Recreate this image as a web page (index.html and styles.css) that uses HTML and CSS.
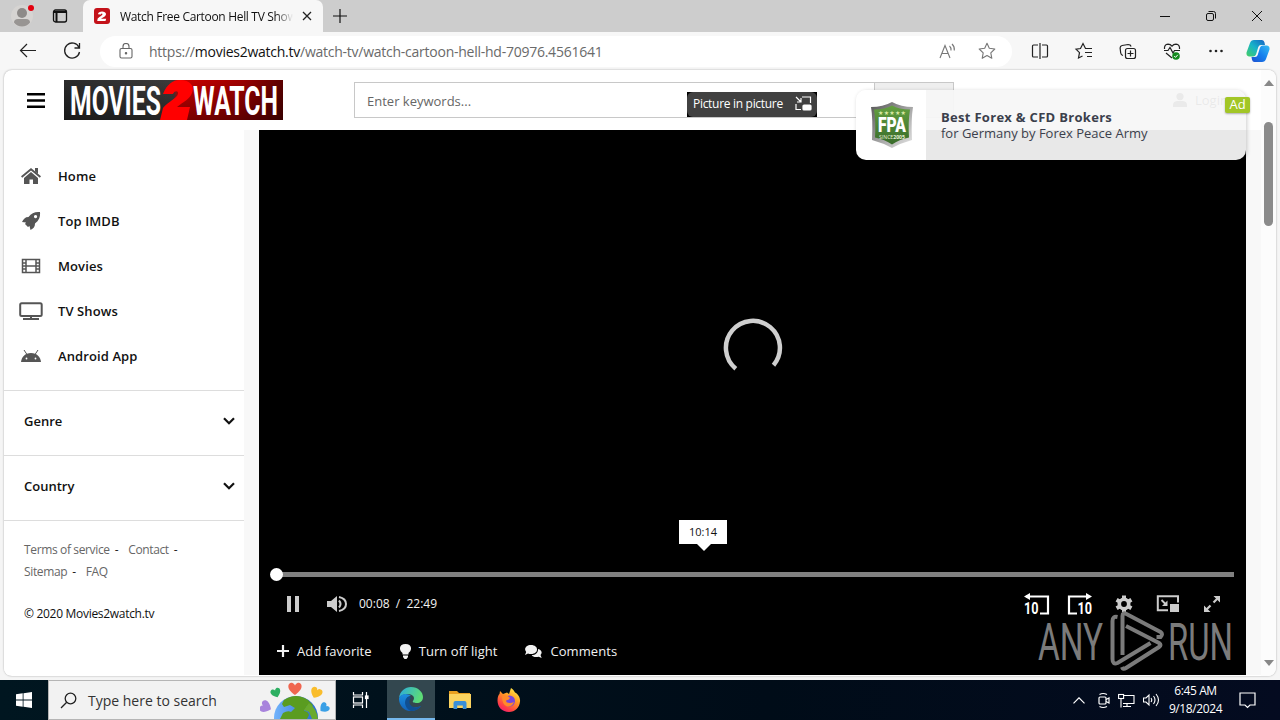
FILE: index.html
```html
<!DOCTYPE html>
<html lang="en">
<head>
    <meta charset="UTF-8">
    <meta name="viewport" content="width=device-width, initial-scale=1.0">
    <title>Watch Free Cartoon Hell TV Shows</title>
    <link rel="stylesheet" href="styles.css">
</head>
<body>
    <!-- Tab strip -->
    <div class="titlebar">
        <div class="title-btn profile">
            <svg width="24" height="24" viewBox="0 0 24 24"><circle cx="12" cy="12" r="11" fill="#d6d4d2"/><circle cx="12" cy="9" r="5" fill="#8d8a88"/><path d="M4 18.500q0-3.500 4-3.500h8q4 0 4 3.500-3 4-8 4t-8-4z" fill="#989593"/><circle cx="21" cy="4" r="3" fill="#e3000f"/></svg>
        </div>
        <div class="title-btn tabs-menu">
            <svg width="16" height="16" viewBox="0 0 16 16" fill="none" stroke="#111"><rect x="1.500" y="2" width="13" height="12" rx="2" stroke-width="1.300"/><path d="M2 4h12M4.500 4v10" stroke-width="2"/></svg>
        </div>
        <div class="tab">
            <svg width="16" height="16" viewBox="0 0 16 16"><rect width="16" height="16" rx="3" fill="#c4121a"/><path d="M4 6.200C4 2.500 12 2.500 12 6c0 2.300-3 3.300-5 4.700h5.200L11.500 13H3.200l.5-2.500C6 8.500 8.500 7.400 8.500 6.300 8.500 5.300 7 5.400 6.800 6.500z" fill="#fff"/></svg>
            <span class="tab-title">Watch Free Cartoon Hell TV Show</span>
            <svg class="tab-close" width="10" height="10" viewBox="0 0 10 10" stroke="#222" stroke-width="1.300"><path d="M1 1l8 8M9 1l-8 8"/></svg>
        </div>
        <div class="title-btn new-tab">
            <svg width="14" height="14" viewBox="0 0 14 14" stroke="#111" stroke-width="1.200"><path d="M7 0v14M0 7h14"/></svg>
        </div>
        <div class="window-btns">
            <svg width="46" height="32" viewBox="0 0 46 32" stroke="#111"><path d="M18 16.500h10"/></svg>
            <svg width="46" height="32" viewBox="0 0 46 32" stroke="#111" fill="none"><rect x="18.500" y="13.500" width="7" height="7" rx="1.500"/><path d="M20.500 11.500h5q2 0 2 2v5"/></svg>
            <svg width="46" height="32" viewBox="0 0 46 32" stroke="#111"><path d="M18 11l10 10M28 11l-10 10"/></svg>
        </div>
    </div>

    <!-- Toolbar -->
    <div class="toolbar">
        <div class="nav-btns">
            <svg width="44" height="38" viewBox="0 0 44 38" stroke="#222" fill="none" stroke-width="1.200"><path d="M14.500 18.500H30M21 12l-6.500 6.500L21 25"/></svg>
            <svg width="44" height="38" viewBox="0 0 44 38" stroke="#222" fill="none" stroke-width="1.300"><path d="M29 15.500a7.500 7.500 0 1 0 .5 4.500M29.500 11v5h-5"/></svg>
        </div>
        <div class="address">
            <svg class="lock" width="14" height="16" viewBox="0 0 14 16" stroke="#666" fill="none" stroke-width="1.100"><rect x="1" y="5.500" width="12" height="9.500" rx="1.500"/><path d="M4 5.500V3.500a3 3 0 0 1 6 0v2"/><circle cx="7" cy="10.200" r=".7" fill="#666"/></svg>
            <span class="url">https://<b>movies2watch.tv</b>/watch-tv/watch-cartoon-hell-hd-70976.4561641</span>
            <svg class="read-aloud" width="18" height="16" viewBox="0 0 18 16" stroke="#777" fill="none" stroke-width="1.100"><path d="M1 15L6 2.500 11 15M3 10.500h6.300M10.500 3q1.800 1.500 1.500 4.500M13 1q2.800 2.500 2.300 6.500"/></svg>
            <svg class="star" width="18" height="18" viewBox="0 0 18 18" stroke="#777" fill="none" stroke-width="1.100" stroke-linejoin="round"><path d="M9 1.300l2.300 5 5.500.7-4 3.800 1 5.500L9 13.600l-4.800 2.700 1-5.500-4-3.800 5.500-.7z"/></svg>
        </div>
        <div class="tools">
            <svg width="44" height="38" viewBox="0 0 44 38" stroke="#222" fill="none" stroke-width="1.200"><path d="M20 13h-4.500q-1 0-1 1v10q0 1 1 1H20M24 13h4.500q1 0 1 1v10q0 1-1 1H24M22 11v16"/></svg>
            <svg width="44" height="38" viewBox="0 0 44 38" stroke="#222" fill="none" stroke-width="1.200"><path d="M25.500 16.500h-2L21 11.500l-2.500 5-4.500.7 3.500 3.500-1 5.300 4-2M24 16.500h6M23 20.500h7M25 24.500h5"/></svg>
            <svg width="44" height="38" viewBox="0 0 44 38" stroke="#222" fill="none" stroke-width="1.200"><rect x="19.500" y="16.500" width="10" height="10" rx="2"/><path d="M24.500 18.500v6M21.500 21.500h6M17 23.500q-2-.5-2.300-2.500l-.6-5q0-2 2-2.500l6-1q2.500 0 3 2"/></svg>
            <svg width="44" height="38" viewBox="0 0 44 38" stroke="#222" fill="none" stroke-width="1.200"><path d="M14.500 17q-.5-4.500 3.500-4.800 2.500 0 4 2 1.500-2 4-2 4 .3 3.500 4.800M14 18.500h4l2-3 3 5.500 1.500-2.500H30M16 21l6 5"/><circle cx="26" cy="24" r="3.800" fill="#138a1e" stroke="none"/><path d="M24.200 24l1.300 1.400 2.300-2.600" stroke="#fff" stroke-width="1"/></svg>
            <svg width="44" height="38" viewBox="0 0 44 38" fill="#222"><circle cx="16.500" cy="19" r="1.300"/><circle cx="22" cy="19" r="1.300"/><circle cx="27.500" cy="19" r="1.300"/></svg>
        </div>
        <svg class="copilot" width="24" height="22" viewBox="0 0 24 22">
            <defs>
                <linearGradient id="cpA" x1="0" y1="1" x2="1" y2="0"><stop offset="0" stop-color="#46cf63"/><stop offset=".5" stop-color="#17b3c9"/><stop offset="1" stop-color="#1561c4"/></linearGradient>
                <linearGradient id="cpB" x1="0" y1="1" x2="1" y2="0"><stop offset="0" stop-color="#1d4fd0"/><stop offset=".5" stop-color="#1580ee"/><stop offset="1" stop-color="#35bdf3"/></linearGradient>
            </defs>
            <path d="M8 0h8q2 0 2.500 2.500L19 5h-4q-2 0-2.700 2L10 14.500Q9.300 16.500 7 16.500H3Q0 16 .5 12.500L4 3q1-3 4-3z" fill="url(#cpA)"/>
            <path d="M16 22H8.500q-2 0-2.500-2.300L5.500 17H9q2 0 2.700-2L14 7.500q.7-2 3-2h4q3 .5 2.500 4L20 19q-1 3-4 3z" fill="url(#cpB)"/>
        </svg>
    </div>

    <!-- Web page -->
    <div class="viewport">
        <div class="page">
            <header class="site-header">
                <svg class="menu-icon" width="18" height="15" viewBox="0 0 18 15" fill="#000"><path d="M0 0h18v2.600H0zM0 6.200h18v2.600H0zM0 12.400h18V15H0z"/></svg>
                <svg class="logo" width="219" height="40" viewBox="0 0 219 40">
                    <defs>
                        <linearGradient id="lgA"><stop offset="0" stop-color="#2b2b2b"/><stop offset=".5" stop-color="#3c3c3c"/><stop offset=".52" stop-color="#c00"/><stop offset=".8" stop-color="#a00000"/><stop offset="1" stop-color="#5c0000"/></linearGradient>
                        <linearGradient id="lgB" x2="0" y2="1"><stop offset="0" stop-color="#000" stop-opacity="0"/><stop offset="1" stop-color="#000" stop-opacity=".4"/></linearGradient>
                    </defs>
                    <rect width="219" height="40" fill="url(#lgA)"/>
                    <rect width="219" height="40" fill="url(#lgB)"/>
                    <path d="M99 14C103 4 109 0 116 0c10 0 15 6 12 13-2 6-9 9-15 14h13l-3 13H96l3-12c5-6 14-10 15-14 1-3-3-4-5 0z" fill="#f00"/>
                    <text class="logo-text" x="6" y="34.500" textLength="91" lengthAdjust="spacingAndGlyphs">MOVIES</text>
                    <text class="logo-text" x="129" y="34.500" textLength="85" lengthAdjust="spacingAndGlyphs">WATCH</text>
                </svg>
                <div class="search">
                    <span class="search-input">Enter keywords...</span>
                    <span class="search-btn"></span>
                </div>
                <div class="login">
                    <svg width="14" height="14" viewBox="0 0 14 14" fill="#222"><circle cx="7" cy="3.600" r="3.600"/><path d="M0 14v-2q0-3.500 4-4h6q4 .5 4 4v2z"/></svg>
                    <span>Login</span>
                </div>
            </header>
            <div class="content">
                <aside class="sidebar">
                    <ul class="menu">
                        <li><svg width="22" height="18" viewBox="0 0 22 18" fill="#555"><path d="M11 1l10 8.300-1.200 1.400L11 3.500l-8.800 7.200L1 9.300z"/><path d="M15 1h3v6l-3-2.500zM11 5l7 6v6h-5v-4.500H9.500V17H4v-6z"/></svg><span>Home</span></li>
                        <li><svg width="22" height="20" viewBox="0 0 22 20" fill="#555"><path fill-rule="evenodd" d="M20 1c.5 5-1 8.500-5 11.500 0 3.500-1.500 5-4.500 6.500l-1-4-1.500 1-3-3 1-1.500-4-.5C3.500 8 5 6 8.500 6 11.500 2 15 .5 20 1zM15.500 4a1.600 1.600 0 1 0 .1 0z"/></svg><span>Top IMDB</span></li>
                        <li><svg width="22" height="16" viewBox="0 0 22 16" fill="none" stroke="#555" stroke-width="1.500"><rect x="2.500" y="1.500" width="17" height="13"/><path d="M6 1v14M16 1v14M6 8h10M2.500 5H6M2.500 8H6M2.500 11H6M16 5h3.500M16 8h3.500M16 11h3.500"/></svg><span>Movies</span></li>
                        <li><svg width="24" height="18" viewBox="0 0 24 18" fill="none" stroke="#555" stroke-width="2"><rect x="1.200" y="1.200" width="21.500" height="12.800" rx="1.500"/><path d="M4 17h16M12 14v3"/></svg><span>TV Shows</span></li>
                        <li><svg width="22" height="14" viewBox="0 0 22 14" fill="#555"><path d="M1 13C1.500 8 5 4 11 4s9.500 4 10 9z"/><path d="M4 1l3 4.500M18 1l-3 4.500" stroke="#555"/><circle cx="6.500" cy="9.500" r=".9" fill="#fff"/><circle cx="15.500" cy="9.500" r=".9" fill="#fff"/></svg><span>Android App</span></li>
                    </ul>
                    <div class="group"><span>Genre</span><svg width="12" height="8" viewBox="0 0 12 8" fill="none" stroke="#111" stroke-width="2.200"><path d="M1 1.200l5 5 5-5"/></svg></div>
                    <div class="group"><span>Country</span><svg width="12" height="8" viewBox="0 0 12 8" fill="none" stroke="#111" stroke-width="2.200"><path d="M1 1.200l5 5 5-5"/></svg></div>
                    <div class="footer-links">
                        <div><a>Terms of service</a><i>-</i><a>Contact</a><i>-</i></div>
                        <div><a>Sitemap</a><i>-</i><a>FAQ</a></div>
                    </div>
                    <p class="copyright">© 2020 Movies2watch.tv</p>
                </aside>

                <main class="player">
                    <div class="stage">
                        <svg class="spinner" width="64" height="64" viewBox="0 0 64 64" fill="none" stroke="#cfcfcf" stroke-width="4.500"><path d="M14.800 52.700A27 27 0 1 1 52.500 49.300"/></svg>
                        <div class="time-tip">10:14</div>
                    </div>
                    <div class="progress"><div class="track"><div class="knob"></div></div></div>
                    <div class="controls">
                        <svg class="pause" width="12" height="16" viewBox="0 0 12 16" fill="#ccc"><path d="M0 0h4v16H0zM8 0h4v16H8z"/></svg>
                        <svg class="volume" width="20" height="16" viewBox="0 0 20 16"><path d="M0 5h4l6-5v16l-6-5H0z" fill="#ccc"/><path d="M12 4.500q3 3.500 0 7M12 1q7 1.500 7 7t-7 7" fill="none" stroke="#ccc" stroke-width="2"/></svg>
                        <span class="time">00:08&nbsp; /&nbsp; 22:49</span>
                        <div class="right-controls">
                            <svg width="44" height="32" viewBox="0 0 44 32"><path d="M12 8.500h22v17h-8" fill="none" stroke="#fff" stroke-width="2.200"/><path d="M10 8.500L16 5v7z" fill="#fff"/><text class="skip-text" x="10" y="25.500" textLength="14.500" lengthAdjust="spacingAndGlyphs">10</text></svg>
                            <svg width="44" height="32" viewBox="0 0 44 32"><path d="M31 8.500H11v17h8" fill="none" stroke="#fff" stroke-width="2.200"/><path d="M34 8.500L28 5v7z" fill="#fff"/><text class="skip-text" x="19.500" y="25.500" textLength="14.500" lengthAdjust="spacingAndGlyphs">10</text></svg>
                            <svg width="44" height="32" viewBox="0 0 44 32"><circle cx="22" cy="16" r="4.700" fill="none" stroke="#ccc" stroke-width="3.600"/><path d="M22 7.500v3M22 21.500v3M14.600 11.700l2.600 1.500M26.800 18.800l2.600 1.500M14.600 20.300l2.600-1.500M26.800 13.200l2.600-1.500" stroke="#ccc" stroke-width="4"/></svg>
                            <svg width="44" height="32" viewBox="0 0 44 32"><path d="M32 14.500V8.200H11.800v14H22" fill="none" stroke="#ccc" stroke-width="2"/><rect x="24" y="16" width="9" height="8" fill="#ccc"/><path d="M21.500 12.500V18H16z" fill="#ccc"/><path d="M15.500 12l4 4" stroke="#ccc" stroke-width="1.800"/></svg>
                            <svg width="44" height="32" viewBox="0 0 44 32"><path d="M23.500 8H30v6.500zM14 17.500V24h6.500z" fill="#ccc"/><path d="M28 10l-4.500 4.500M16 22l4.500-4.500" stroke="#ccc" stroke-width="2.200"/></svg>
                        </div>
                    </div>
                    <div class="actions">
                        <div><svg width="12" height="12" viewBox="0 0 12 12" stroke="#f2f2f2" stroke-width="2.200"><path d="M6 0v12M0 6h12"/></svg><span>Add favorite</span></div>
                        <div><svg width="11" height="15" viewBox="0 0 11 15" fill="#f2f2f2"><path d="M5.500 0C12 0 12.500 6 8.500 9v1.500h-6V9C-1.500 6-1 0 5.500 0zM3 11.500h5V13l-1.500 2h-2L3 13z"/></svg><span>Turn off light</span></div>
                        <div><svg width="17" height="14" viewBox="0 0 17 14" fill="#f2f2f2"><path d="M6 1c8 0 8 9 0 9-1.200 0-2 0-3-.5L0 11l1.200-3C-1.500 5 1 1 6 1z"/><path d="M13 5c4 1 4.500 4 2.500 6l1.200 3-3-1.300c-3 .8-6 .3-7-1.700 4 0 6.500-2.500 6.300-6z"/></svg><span>Comments</span></div>
                    </div>
                    <svg class="watermark" width="196" height="62" viewBox="0 0 196 62">
                        <g class="wm-text"><text x="0" y="49" textLength="65" lengthAdjust="spacingAndGlyphs">ANY</text><text x="130" y="49" textLength="65" lengthAdjust="spacingAndGlyphs">RUN</text></g>
                        <g fill="none" stroke="#7b7b7b" stroke-width="4"><path d="M79.500 6q-5-1-5 4v38q0 6 5 4l33-20"/><path d="M84.500 44V5q0-4 4-2l34 18q3 2 0 5h-4"/><path d="M88 15l33 17q3 2 0 4L88 57q-3 2-4-1"/></g>
                    </svg>
                </main>
            </div>
        </div>
        <div class="scrollbar">
            <svg width="10" height="6" viewBox="0 0 10 6" fill="#888"><path d="M5 0l5 6H0z"/></svg>
            <div class="thumb"></div>
            <svg width="10" height="6" viewBox="0 0 10 6" fill="#888"><path d="M0 0h10L5 6z"/></svg>
        </div>

        <!-- Picture in picture hint -->
        <div class="pip">
            <div class="pip-inner">
                <span>Picture in picture</span>
                <svg width="17" height="15" viewBox="0 0 17 15" fill="none" stroke="#fff" stroke-width="1.200"><path d="M7 1h8.500v6M1 8v5.500h5M1 1l5 5M6 2v4H2"/><rect x="8" y="9" width="8" height="5" rx="1" fill="#fff"/></svg>
            </div>
        </div>

        <!-- Ad popup -->
        <div class="ad">
            <div class="ad-logo">
                <svg width="44" height="46" viewBox="0 0 44 46">
                    <defs><linearGradient id="shield" x2="1" y2="1"><stop offset="0" stop-color="#555"/><stop offset=".45" stop-color="#999"/><stop offset="1" stop-color="#e8e8e8"/></linearGradient><linearGradient id="green" x2="0" y2="1"><stop offset="0" stop-color="#64a040"/><stop offset="1" stop-color="#386b2a"/></linearGradient></defs>
                    <path d="M1 5q12 0 21-5 9 5 21 5-2 12-1 33Q31 41 22 46 13 41 2 38 3 16 1 5z" fill="url(#shield)"/>
                    <path d="M4 7.500q11 0 18-4 7 4 18 4-2 12-1 28-10 2-17 7-7-5-17-7Q6 20 4 7.500z" fill="url(#green)"/>
                    <text class="fpa-stars" x="22" y="12.500" textLength="28" text-anchor="middle">★★★★★</text>
                    <text class="fpa-text" x="8" y="30" textLength="28" lengthAdjust="spacingAndGlyphs">FPA</text>
                    <text class="fpa-since" x="9" y="37" textLength="26" lengthAdjust="spacingAndGlyphs">SINCE<tspan font-weight="700">2005</tspan></text>
                </svg>
            </div>
            <div class="ad-body">
                <strong>Best Forex &amp; CFD Brokers</strong>
                <span>for Germany by Forex Peace Army</span>
            </div>
            <div class="ad-badge">Ad</div>
        </div>
    </div>

    <!-- Windows taskbar -->
    <div class="taskbar">
        <div class="start"><svg width="16" height="16" viewBox="0 0 16 16" fill="#fff"><path d="M0 2.200L6.700 1.300v6.300H0zM7.500 1.200L16 0v7.600H7.500zM0 8.400h6.700v6.300L0 13.800zM7.500 8.400H16V16l-8.500-1.200z"/></svg></div>
        <div class="task-search">
            <svg width="17" height="17" viewBox="0 0 17 17" fill="none" stroke="#222" stroke-width="1.300"><circle cx="10.500" cy="6.500" r="5.300"/><path d="M6.700 10.300L1 16"/></svg>
            <span>Type here to search</span>
            <svg class="globe" width="70" height="38" viewBox="0 0 70 38">
                <defs>
                    <linearGradient id="sea"><stop offset="0" stop-color="#72b4fb"/><stop offset="1" stop-color="#2667d0"/></linearGradient>
                    <path id="heart" d="M0 5C-9-1-5-6-2-5q1.500.5 2 2 .5-1.500 2-2C5-6 9-1 0 5z"/>
                </defs>
                <circle cx="36" cy="37" r="22" fill="url(#sea)"/>
                <path d="M24 19q12-8 24 0l5 5q-2 4-6 1l-3 5q4 0 5 4l-2 4H20l3-6q5-3 8-1l4-4-5-3-6 2-2-3z" fill="#5a9c20"/>
                <path d="M49 22q8 6 9 16h-6l-3-7-5-2z" fill="#6aaa2d"/>
                <use href="#heart" transform="translate(35 8) scale(1.200)" fill="#f06650"/>
                <use href="#heart" transform="translate(16 12) rotate(-20) scale(.9)" fill="#2daf62"/>
                <use href="#heart" transform="translate(56 12) rotate(25) scale(1.050)" fill="#f9bd2c"/>
                <use href="#heart" transform="translate(6 26) rotate(-65) scale(1.100)" fill="#a883dc"/>
                <use href="#heart" transform="translate(64 27) rotate(50) scale(.9)" fill="#3aa0e6"/>
            </svg>
        </div>
        <div class="task-app task-view"><svg width="18" height="16" viewBox="0 0 18 16" fill="none" stroke="#fff" stroke-width="1.200"><path d="M1.500 0v3h9V0M1.500 16v-3h9v3M14.500 0v16"/><rect x="1.500" y="5" width="9" height="6"/><rect x="13.500" y="4" width="2.500" height="2.500" fill="#fff"/></svg></div>
        <div class="task-app active">
            <svg width="24" height="24" viewBox="0 0 24 24">
                <defs><linearGradient id="edA" x1="0" y1="0" x2="1" y2=".3"><stop offset="0" stop-color="#2aa9e0"/><stop offset="1" stop-color="#5ddc76"/></linearGradient><linearGradient id="edB" x2="0" y2="1"><stop offset="0" stop-color="#1c8fe0"/><stop offset="1" stop-color="#1260b8"/></linearGradient></defs>
                <path d="M0 11C1 4 6 0 12 0c7 0 12 5 12 10 0 4-3 6-6 6-3 0-5-1-4-2 3-4-1-7-5-7-5 0-8 2-9 4z" fill="url(#edA)"/>
                <path d="M0 11c2-5 9-5 12-2-4 0-5 4-4 7 1 4 6 6 14 3-3 4-8 5.500-12 5C4 23.500-.5 17 0 11z" fill="url(#edB)"/>
                <path d="M8.500 10C3 15 8 24 13 24c4-.5 7-2 9-5-7 3-11 0-11.500-3.500-.2-2 .5-3.500 1.500-4.500-1-1.500-2.500-1.500-3.500-1z" fill="#114f91"/>
            </svg>
        </div>
        <div class="task-app">
            <svg width="22" height="18" viewBox="0 0 22 18"><path d="M0 0h8l2 2h11v5H0z" fill="#e9a020"/><path d="M0 3h22v14H0z" fill="#fbd35f"/><path d="M4.500 18v-6q0-2 2-2h9q2 0 2 2v6h-3.700v-3.500H8.200V18z" fill="#3a8fd8"/></svg>
        </div>
        <div class="task-app">
            <svg width="24" height="24" viewBox="0 0 24 24">
                <defs><linearGradient id="ff" x1=".8" y1="0" x2=".2" y2="1"><stop offset="0" stop-color="#fff04a"/><stop offset=".4" stop-color="#ff9a24"/><stop offset=".8" stop-color="#ff3b48"/><stop offset="1" stop-color="#ec1a78"/></linearGradient></defs>
                <path d="M3 3l3 3 4-1.500L12 6l2-6c2 1 3 3 4 4.500 3 1.500 5.500 5 5 9C22.500 19.500 18 24 12 24 5 24 .5 19 .5 12.500.5 9 1.500 6.500 2.500 6z" fill="url(#ff)"/>
                <circle cx="12.500" cy="13" r="5.500" fill="#7747dd"/><path d="M5 8q5-2 8 2-1 2-4 2.500 0 2.500 4 2.500 2 0 4-1-2 5-7 4.500Q5 17 5 8z" fill="#ff8a2a"/>
            </svg>
        </div>
        <div class="tray">
            <svg class="chev" width="12" height="7" viewBox="0 0 12 7" fill="none" stroke="#fff" stroke-width="1.200"><path d="M.5 6.300L6 .8l5.500 5.500"/></svg>
            <svg width="12" height="17" viewBox="0 0 12 17" fill="none" stroke="#fff" stroke-width="1.200"><rect x="1" y="5" width="7" height="7" rx="1"/><path d="M8 7.500l3-1.500v5L8 9.500M1.500 2.500Q5 .5 9 2.500M1.500 14.500q3.500 2 7.500 0"/></svg>
            <svg width="17" height="15" viewBox="0 0 17 15" fill="none" stroke="#fff" stroke-width="1.100"><path d="M5.500 2.500H16v8H5M9 10.500v3M5 13.500h8M3 5.500v9"/><rect x=".6" y="1.500" width="5" height="4"/></svg>
            <svg width="17" height="14" viewBox="0 0 17 14" fill="none" stroke="#fff" stroke-width="1.100"><path d="M.5 5h2.500L6 2v10L3 9H.5zM8 5q1.500 2 0 4M10.500 3q3 4 0 8M13 1q5 6 0 12"/></svg>
            <div class="clock"><span>6:45 AM</span><span>9/18/2024</span></div>
            <svg class="notify" width="17" height="17" viewBox="0 0 17 17" fill="none" stroke="#fff" stroke-width="1.200"><path d="M1 1h15v12h-5l-2.500 2.500L6 13H1z"/></svg>
        </div>
    </div>
</body>
</html>
```

FILE: styles.css
```css
* {
    box-sizing: border-box;
}

body {
    margin: 0;
    width: 1280px;
    height: 720px;
    overflow: hidden;
    display: flex;
    flex-direction: column;
    background: #f5f5f5;
    font-family: "Open Sans", "Noto Sans", sans-serif;
    font-size: 13px;
    color: #111;
    white-space: nowrap;
}

svg {
    display: block;
    flex: none;
}

/* tab strip */
.titlebar {
    height: 32px;
    display: flex;
    align-items: stretch;
    background: #cdcdcd;
}

.title-btn {
    display: flex;
    align-items: center;
    justify-content: center;
}

.profile {
    width: 44px;
}

.tabs-menu {
    width: 32px;
}

.tab {
    width: 240px;
    margin-left: 7px;
    padding: 0 11px;
    display: flex;
    align-items: center;
    background: #f7f7f7;
    border-radius: 7px 7px 0 0;
}

.tab-title {
    width: 173px;
    margin-left: 10px;
    overflow: hidden;
    font-size: 12px;
    letter-spacing: -0.32px;
    -webkit-mask-image: linear-gradient(to right, #000 90%, transparent);
    mask-image: linear-gradient(to right, #000 90%, transparent);
}

.tab-close {
    margin-left: 9px;
}

.new-tab {
    width: 34px;
}

.window-btns {
    display: flex;
    margin-left: auto;
}

/* toolbar */
.toolbar {
    height: 38px;
    display: flex;
    align-items: center;
    background: #f7f7f7;
}

.nav-btns {
    display: flex;
    width: 100px;
    padding-left: 6px;
}

.address {
    width: 912px;
    height: 31px;
    display: flex;
    align-items: center;
    padding: 0 16px 0 19px;
    background: #fff;
    border-radius: 16px;
}

.url {
    margin-left: 16px;
    font-size: 14px;
    letter-spacing: -0.25px;
    color: #6a6a6a;
}

.url b {
    font-weight: 400;
    color: #111;
}

.read-aloud {
    margin-left: auto;
}

.star {
    margin-left: 21px;
}

.tools {
    display: flex;
    margin-left: 6px;
}

.copilot {
    margin-left: 8px;
}

/* page */
.viewport {
    position: relative;
    height: 606px;
    margin: 0 4px 4px;
    display: flex;
    overflow: hidden;
    background: #fff;
    border-radius: 8px;
    box-shadow: 0 0 2px rgba(0, 0, 0, 0.35);
}

.page {
    width: 1257px;
}

.site-header {
    height: 60px;
    display: flex;
    align-items: center;
    padding-left: 23px;
}

.logo {
    margin-left: 19px;
}

.logo-text {
    font-family: Roboto, sans-serif;
    font-weight: 700;
    font-size: 41px;
    fill: #fff;
}

.search {
    width: 600px;
    height: 36px;
    margin-left: 71px;
    display: flex;
    border: 1px solid #c8c8c8;
}

.search-input {
    flex: 1;
    padding-left: 12px;
    line-height: 36px;
    color: #666;
}

.search-btn {
    width: 79px;
    background: #eee;
    border-left: 1px solid #c8c8c8;
}

.login {
    margin-left: 219px;
    display: flex;
    gap: 8px;
    align-items: center;
}

.content {
    height: 545px;
    display: flex;
    background: #f8f8f8;
}

/* sidebar */
.sidebar {
    width: 240px;
    margin-right: 15px;
    background: #fff;
}

.menu {
    list-style: none;
    height: 261px;
    margin: 0;
    padding: 23px 0 0 16px;
    border-bottom: 1px solid #ddd;
}

.menu li {
    height: 45px;
    display: grid;
    grid-template-columns: 22px 1fr;
    column-gap: 16px;
    align-items: center;
    justify-items: start;
    font-weight: 600;
    letter-spacing: 0.1px;
}

.menu li svg {
    justify-self: center;
}

.group {
    height: 65px;
    display: flex;
    align-items: center;
    justify-content: space-between;
    padding: 0 9px 5px 20px;
    border-bottom: 1px solid #ddd;
    font-weight: 600;
}

.footer-links {
    padding: 18px 0 0 20px;
    font-size: 12px;
    line-height: 22px;
    letter-spacing: -0.36px;
    color: #666;
}

.footer-links i {
    margin: 0 10px 0 5px;
    font-style: normal;
    color: #222;
}

.copyright {
    margin: 20px 0 0 20px;
    font-size: 12px;
    line-height: 22px;
    letter-spacing: -0.3px;
}

/* player */
.player {
    position: relative;
    width: 987px;
    height: 545px;
    background: #000;
    color: #f2f2f2;
}

.stage {
    position: relative;
    height: 430px;
    padding-top: 6px;
    display: flex;
    align-items: center;
    justify-content: center;
}

.time-tip {
    position: absolute;
    left: 420px;
    top: 390px;
    width: 48px;
    height: 24px;
    background: #fff;
    color: #111;
    font-size: 11px;
    line-height: 24px;
    text-align: center;
}

.time-tip::after {
    content: "";
    position: absolute;
    left: 18px;
    top: 24px;
    border: 7px solid transparent;
    border-top-color: #fff;
    border-bottom: 0;
}

.progress {
    height: 28px;
    padding: 12px 12px 0 18px;
}

.track {
    position: relative;
    height: 5px;
    background: #808080;
}

.knob {
    position: absolute;
    left: -7px;
    top: -4px;
    width: 13px;
    height: 13px;
    background: #fff;
    border-radius: 50%;
}

.controls {
    height: 32px;
    display: flex;
    align-items: center;
    padding-left: 28px;
}

.volume {
    margin-left: 28px;
}

.time {
    margin-left: 12px;
    padding-bottom: 2px;
    font-size: 12px;
}

.right-controls {
    display: flex;
    margin-left: auto;
    margin-right: 12px;
}

.skip-text {
    font-family: Roboto, sans-serif;
    font-weight: 700;
    font-size: 16px;
    fill: #fff;
}

.actions {
    height: 30px;
    margin-top: 16px;
    padding-left: 18px;
    display: flex;
    gap: 28px;
    letter-spacing: 0.06px;
}

.actions div {
    display: flex;
    align-items: center;
    gap: 8px;
}

.watermark {
    position: absolute;
    left: 779px;
    top: 481px;
}

.wm-text {
    font-family: Roboto, sans-serif;
    font-size: 52px;
    fill: #7b7b7b;
}

/* scrollbar */
.scrollbar {
    width: 15px;
    padding: 10px 0 10px;
    display: flex;
    flex-direction: column;
    align-items: center;
    background: #fcfcfc;
}

.thumb {
    width: 9px;
    height: 104px;
    margin: 36px 0 auto;
    background: #8b8b8b;
    border-radius: 5px;
}

/* overlays */
.pip {
    position: absolute;
    left: 683px;
    top: 22px;
    width: 130px;
    height: 25px;
    background: #000;
}

.pip-inner {
    height: 25px;
    display: flex;
    align-items: center;
    justify-content: space-between;
    padding: 0 5px 2px 6px;
    background: #414141;
    border-radius: 6px;
    color: #fff;
    font-size: 12px;
    letter-spacing: -0.3px;
}

.ad {
    position: absolute;
    left: 852px;
    top: 20px;
    width: 390px;
    height: 70px;
    display: flex;
    border-radius: 10px;
    box-shadow: 1px 1px 4px rgba(0, 0, 0, 0.2);
}

.ad-logo {
    width: 70px;
    display: flex;
    align-items: center;
    justify-content: center;
    padding-left: 2px;
    background: #fff;
    border-radius: 10px 0 0 10px;
}

.fpa-text {
    font-family: Roboto, sans-serif;
    font-weight: 900;
    font-size: 20px;
    fill: #fff;
}

.fpa-stars {
    font-family: "DejaVu Sans", sans-serif;
    font-size: 6px;
    fill: #d8e8a0;
}

.fpa-since {
    font-size: 6px;
    fill: #e8f0d8;
}

.ad-body {
    flex: 1;
    display: flex;
    flex-direction: column;
    justify-content: center;
    padding-left: 15px;
    background: rgba(247, 247, 247, 0.94);
    border-radius: 0 10px 10px 0;
    line-height: 16px;
    color: #3b3f4c;
}

.ad-body strong {
    letter-spacing: 0.3px;
}

.ad-badge {
    position: absolute;
    left: 369px;
    top: 7px;
    width: 25px;
    height: 16px;
    background: #a2c626;
    border-radius: 2px;
    box-shadow: 0 1px 2px rgba(0, 0, 0, 0.3);
    color: #fff;
    line-height: 15px;
    text-align: center;
}

/* taskbar */
.taskbar {
    height: 40px;
    flex: none;
    display: flex;
    background: linear-gradient(to right, #001620, #000c18 60%, #040b20);
    color: #fff;
}

.start {
    width: 48px;
    display: flex;
    align-items: center;
    justify-content: center;
}

.task-search {
    width: 288px;
    padding: 0 5px 0 11px;
    display: flex;
    align-items: center;
    background: #f2f2f2;
    border: 1px solid #b5b5b5;
    color: #333;
    font-size: 14px;
}

.task-search span {
    margin-left: 11px;
}

.globe {
    margin-left: auto;
}

.task-app {
    width: 49px;
    display: flex;
    align-items: center;
    justify-content: center;
}

.task-view {
    width: 51px;
    padding-right: 2px;
}

.task-app.active {
    width: 48px;
    background: #33474f;
    border-bottom: 2px solid #76b9ed;
}

.tray {
    margin-left: auto;
    padding-right: 24px;
    display: flex;
    align-items: center;
    gap: 8px;
}

.chev {
    margin-right: 5px;
}

.clock {
    width: 55px;
    display: flex;
    flex-direction: column;
    align-items: center;
    font-size: 12px;
    line-height: 18px;
    letter-spacing: -0.4px;
}

.notify {
    margin-left: 8px;
}
```
